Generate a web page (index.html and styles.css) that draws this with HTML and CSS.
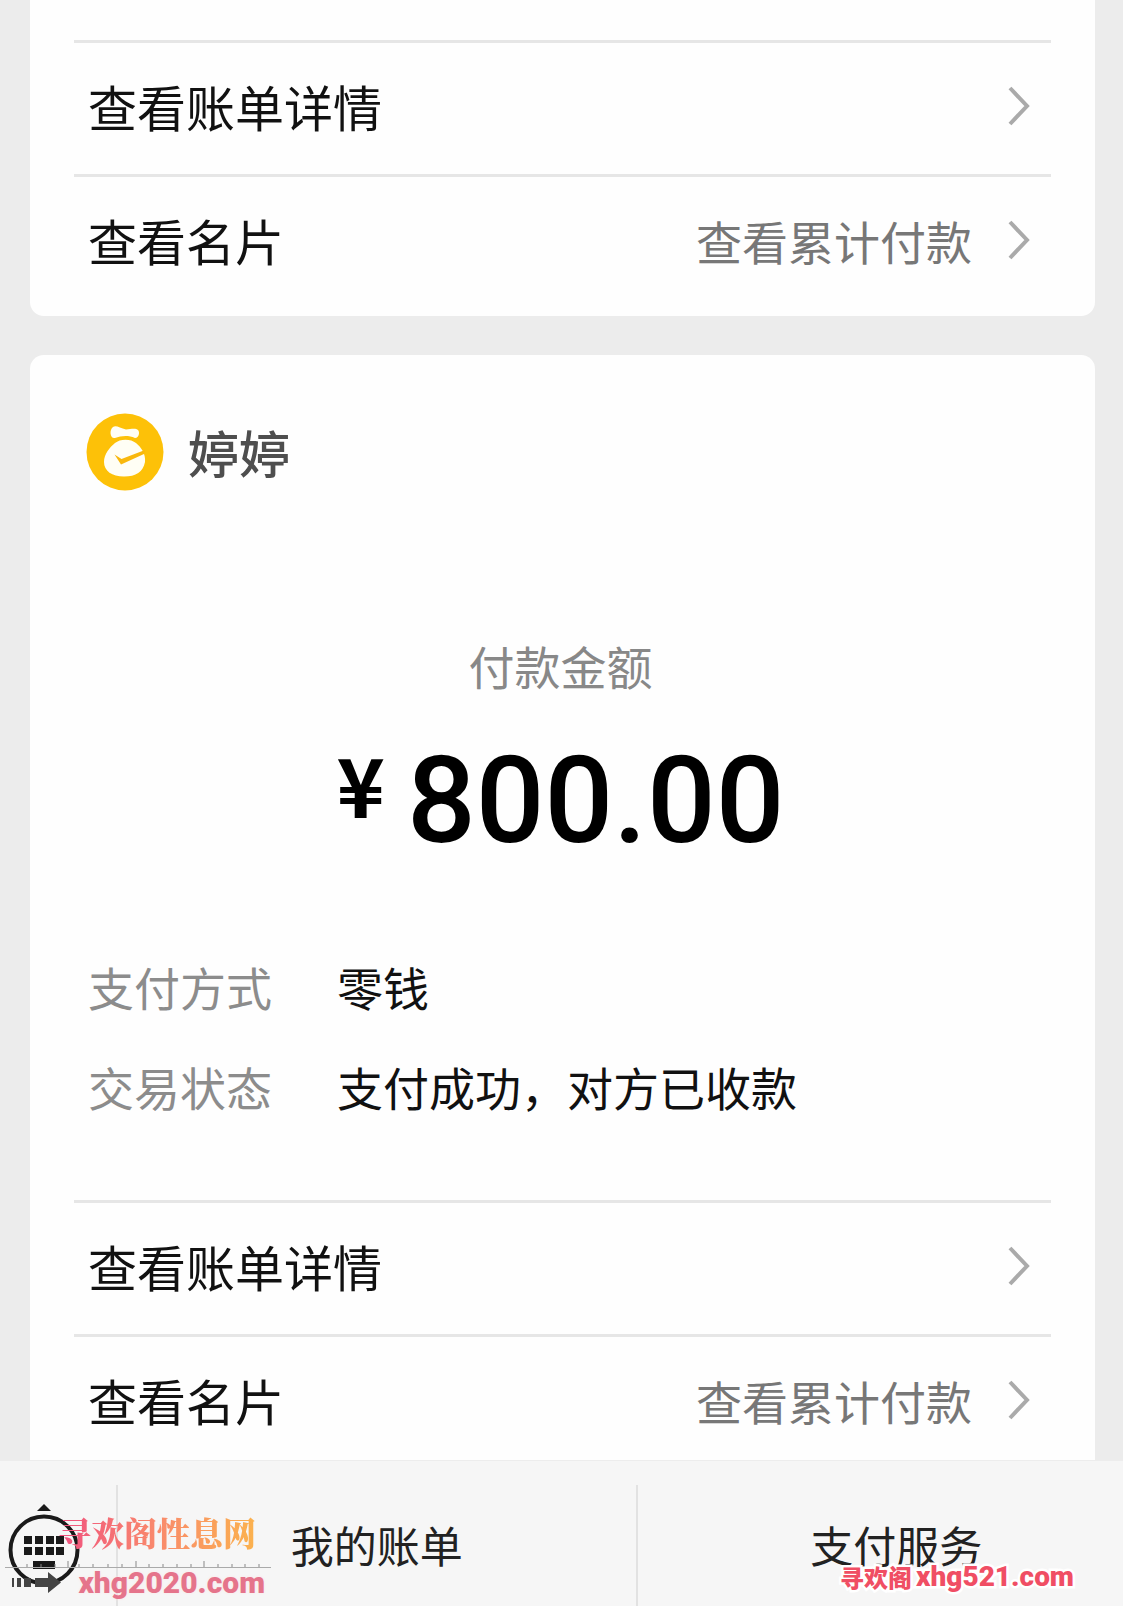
FILE: index.html
```
<!DOCTYPE html>
<html lang="zh-CN">
<head>
    <meta charset="UTF-8">
    <meta name="viewport" content="width=device-width, initial-scale=1">
    <title>支付服务</title>
    <link rel="stylesheet" href="styles.css">
</head>
<body>
    <main class="feed">
        <!-- Previous message, scrolled partly out of view -->
        <section class="card card-cut">
            <nav class="links">
                <a class="row" href="#bill">
                    <span class="row-title">查看账单详情</span>
                    <svg class="chevron" viewBox="0 0 22 40"><path d="M2 2 L19 20 L2 38"/></svg>
                </a>
                <a class="row" href="#contact">
                    <span class="row-title">查看名片</span>
                    <span class="row-note">查看累计付款</span>
                    <svg class="chevron" viewBox="0 0 22 40"><path d="M2 2 L19 20 L2 38"/></svg>
                </a>
            </nav>
        </section>

        <section class="card">
            <header class="payee">
                <svg class="avatar" viewBox="0 0 78 78">
                    <circle cx="39" cy="39" r="38.5" fill="#fdc108"/>
                    <path d="M27 14 C30 12 34 15 40 16.500 C45 16 50 15 52 17 C54 19 53 25 49 25 C42 22 35 23 29 25 C24 26 23 17 27 14 Z" fill="#fffef5"/>
                    <path d="M29 30 C34 25.500 45 25.500 50 30 C55 34 60 41 59 49 C57 59 50 63.500 38 63.500 C26 63.500 18 58 18 49 C18 41 24 34 29 30 Z" fill="#fffef5"/>
                    <path d="M28.500 41.500 L35.500 46 L59 37 L58 41 L35 51.500 Z" fill="#f9b80c"/>
                </svg>
                <h2 class="payee-name">婷婷</h2>
            </header>

            <div class="amount">
                <p class="amount-label">付款金额</p>
                <p class="amount-value"><span class="currency">¥</span><span>800.00</span></p>
            </div>

            <dl class="details">
                <dt>支付方式</dt>
                <dd>零钱</dd>
                <dt>交易状态</dt>
                <dd>支付成功，对方已收款</dd>
            </dl>

            <nav class="links">
                <a class="row" href="#bill">
                    <span class="row-title">查看账单详情</span>
                    <svg class="chevron" viewBox="0 0 22 40"><path d="M2 2 L19 20 L2 38"/></svg>
                </a>
                <a class="row" href="#contact">
                    <span class="row-title">查看名片</span>
                    <span class="row-note">查看累计付款</span>
                    <svg class="chevron" viewBox="0 0 22 40"><path d="M2 2 L19 20 L2 38"/></svg>
                </a>
            </nav>
        </section>
    </main>

    <footer class="toolbar">
        <button class="keyboard" type="button" aria-label="键盘">
            <svg class="keyboard-icon" viewBox="0 0 72 84">
                <path d="M29 7 L36 0 L43 7 Z" fill="#1a1a1a"/>
                <circle cx="36" cy="46" r="33.5" fill="none" stroke="#1a1a1a" stroke-width="4"/>
                <g fill="#1a1a1a">
                    <rect x="16" y="32" width="8" height="8"/>
                    <rect x="27" y="32" width="8" height="8"/>
                    <rect x="38" y="32" width="8" height="8"/>
                    <rect x="48" y="32" width="8" height="8"/>
                    <rect x="16" y="43" width="8" height="8"/>
                    <rect x="27" y="43" width="8" height="8"/>
                    <rect x="38" y="43" width="8" height="8"/>
                    <rect x="48" y="43" width="8" height="8"/>
                    <rect x="25" y="57" width="22" height="8"/>
                </g>
            </svg>
        </button>
        <button class="tab" type="button">我的账单</button>
        <button class="tab" type="button">支付服务</button>
    </footer>

    <div class="mark mark-left">
        <span class="mark-name">寻欢阁性息网</span>
        <svg class="mark-ruler" viewBox="0 0 266 32">
            <path d="M0 6.5 H266" stroke="#aaa" fill="none"/>
            <path d="M22 6V3 M36 6V3 M50 6V3 M63 6V0 M74 6V3 M88 6V3 M103 6V3 M117 6V3 M131 6V0 M144 6V3 M158 6V3 M172 6V3 M186 6V3 M199 6V0 M213 6V3 M227 6V3 M240 6V3 M254 6V3" stroke="#888" fill="none"/>
            <path d="M7 17h2v9h-2z M12 17h4v9h-4z M19 17h7v9h-7z M30 17h13v-6l13 10.500l-13 10.500v-6h-13z" fill="#444"/>
        </svg>
        <span class="mark-site">xhg2020.com</span>
    </div>
    <div class="mark mark-right"><span class="mark-prefix">寻欢阁</span><span>xhg521.com</span></div>
</body>
</html>
```

FILE: styles.css
```
* {
    box-sizing: border-box;
}
body {
    display: flex;
    flex-direction: column;
    height: 100vh;
    margin: 0;
    position: relative;
    overflow: hidden;
    background-color: #ececec;
    color: #111;
    font-family: "Noto Sans CJK SC", sans-serif;
}
p, h2, dl, dd {
    margin: 0;
}
.feed {
    flex: 1;
    min-height: 0;
    overflow: hidden;
}
.card {
    margin: 0 28px 39px 30px;
    padding: 58px 44px 8px;
    border-radius: 14px;
    background-color: #fefefe;
}
.card-cut {
    padding-top: 40px;
    border-top-left-radius: 0;
    border-top-right-radius: 0;
}

/* Link rows */
.row {
    display: flex;
    align-items: center;
    height: 134px;
    padding: 0 21px 6px 14px;
    border-top: 3px solid #e6e6e6;
    color: #111;
    text-decoration: none;
}
.row-title {
    flex: 1;
    font-size: 49px;
    line-height: 60px;
}
.row-note {
    margin-right: 36px;
    color: #777;
    font-size: 46px;
    line-height: 60px;
}
.chevron {
    width: 22px;
    height: 40px;
    fill: none;
    stroke: #aaa;
    stroke-width: 4;
}

/* Payment */
.payee {
    display: flex;
    align-items: center;
    gap: 24px;
    padding-left: 12px;
}
.avatar {
    width: 78px;
    height: 78px;
}
.payee-name {
    color: #4e4e4e;
    font-size: 51px;
    font-weight: 500;
    line-height: 78px;
}
.amount {
    margin-top: 144px;
    padding-right: 4px;
    text-align: center;
}
.amount-label {
    color: #888;
    font-size: 46px;
    line-height: 60px;
}
.amount-value {
    display: flex;
    justify-content: center;
    align-items: flex-start;
    gap: 22px;
    margin-top: 34px;
    color: #000;
    font-family: Roboto, sans-serif;
    font-size: 121px;
    font-weight: 500;
    line-height: 144px;
}
.currency {
    font-family: "Noto Sans CJK SC", sans-serif;
    font-size: 82px;
    font-weight: 700;
    line-height: 108px;
}
.details {
    display: grid;
    grid-template-columns: 249px 1fr;
    row-gap: 40px;
    margin: 83px 0 84px;
    padding-left: 14px;
    font-size: 46px;
    line-height: 60px;
}
.details dt {
    color: #8c8c8c;
}

/* Bottom bar, its last tab runs past the window edge */
.toolbar {
    display: flex;
    align-items: stretch;
    height: 146px;
    margin-right: -32px;
    padding-top: 24px;
    border-top: 1px solid #ededed;
    background-color: #f6f6f6;
}
.toolbar button {
    border: 0;
    background: none;
    color: #222;
    font-family: inherit;
}
.keyboard {
    width: 116px;
    padding: 0 0 0 8px;
    text-align: left;
}
.keyboard-icon {
    display: block;
    width: 72px;
    height: 84px;
}
.toolbar .tab {
    flex: 1;
    padding: 0 0 4px;
    border-left: 2px solid #e2e2e2;
    font-size: 43px;
}

/* Site marks over the bottom bar */
.mark {
    position: absolute;
    pointer-events: none;
    white-space: nowrap;
}
.mark-left {
    left: 5px;
    bottom: 9px;
    display: grid;
    grid-template-rows: 46px 36px;
    row-gap: 6px;
    width: 266px;
}
.mark-name {
    justify-self: end;
    margin-right: 15px;
    background: linear-gradient(90deg, #f0507f, #f98a6c 50%, #fbb24e);
    background-clip: text;
    -webkit-background-clip: text;
    color: transparent;
    font-family: "Noto Serif CJK SC", "Noto Sans CJK SC", serif;
    font-size: 33px;
    font-weight: 900;
    line-height: 46px;
}
.mark-ruler {
    grid-area: 2 / 1;
    width: 266px;
    height: 32px;
}
.mark-site {
    grid-area: 2 / 1;
    justify-self: end;
    align-self: end;
    margin-right: 6px;
    color: #e5748b;
    font-family: Roboto, sans-serif;
    font-size: 30px;
    font-weight: 900;
    line-height: 28px;
    text-shadow: 0 0 3px #fde4e4;
}
.mark-right {
    right: 49px;
    bottom: 14px;
    display: flex;
    align-items: center;
    gap: 4px;
    color: #f04e64;
    font-family: Roboto, sans-serif;
    font-size: 28px;
    font-weight: 900;
    line-height: 30px;
    -webkit-text-stroke: 5px #fff;
    paint-order: stroke fill;
}
.mark-prefix {
    font-family: "Noto Sans CJK SC", sans-serif;
    font-size: 24px;
    font-weight: 900;
}
```
